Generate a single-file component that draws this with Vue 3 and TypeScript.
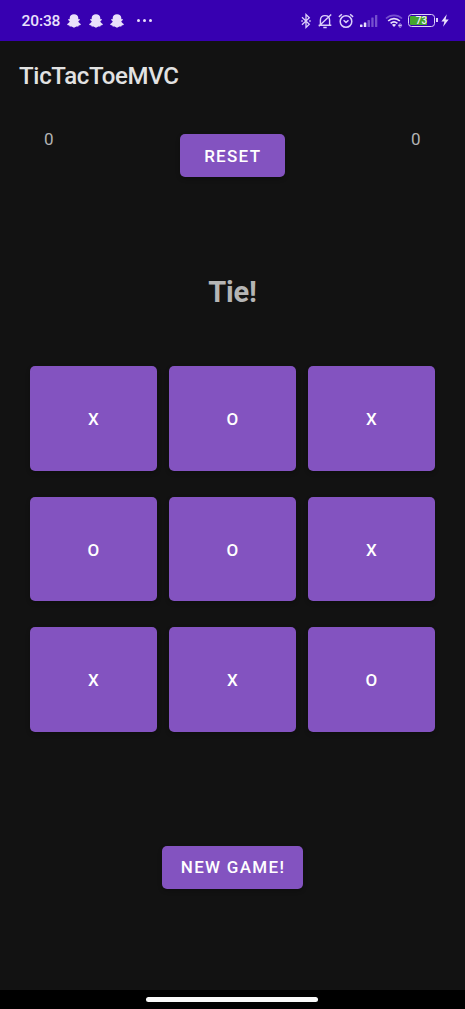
<script setup lang="ts">
import { ref } from 'vue'

type Mark = 'X' | 'O' | ''

const scores = ref<[number, number]>([0, 0])
const board = ref<Mark[]>(['X', 'O', 'X', 'O', 'O', 'X', 'X', 'X', 'O'])
const message = ref('Tie!')
const turn = ref<Mark>('X')

function newGame() {
  board.value = Array<Mark>(9).fill('')
  message.value = ''
  turn.value = 'X'
}

function reset() {
  scores.value = [0, 0]
  newGame()
}

function play(i: number) {
  if (board.value[i]) return
  board.value[i] = turn.value
  turn.value = turn.value === 'X' ? 'O' : 'X'
}
</script>

<template>
  <div class="phone">
    <header class="status">
      <span class="clock">20:38</span>
      <div class="ghosts">
        <svg v-for="n in 3" :key="n" width="14" height="14" viewBox="0 0 14 14">
          <path fill="#e9e0fb" d="M7 .2C4.500.2 2.700 1.800 2.700 4v1.300L1.500 5.100l-.4 1 1.600 1.200C2.300 8.600 1.500 9.400.2 10l.2 1 1.900.4.4 1.100 1.900-.1L7 13.800l2.400-1.400 1.900.1.4-1.100 1.900-.4.2-1c-1.300-.6-2.100-1.400-2.500-2.700l1.600-1.200-.4-1-1.200.2V4C11.300 1.800 9.500.2 7 .2z" />
        </svg>
      </div>
      <div class="dots"><i /><i /><i /></div>
      <div class="system">
        <svg class="bt" width="10" height="16" viewBox="0 0 10 16" fill="none" stroke="#dccffa" stroke-width="1.300">
          <path d="M1 4.300 8.300 11.300 5 14.400V1.600L8.300 4.700 1 11.700" />
          <path d="M.3 8h1.500M8.200 8h1.500" />
        </svg>
        <svg class="bell" width="14" height="16" viewBox="0 0 14 16" fill="none" stroke="#dccffa" stroke-width="1.400">
          <path d="M.7 12.300h12.600M2.400 12V7.200C2.400 4.200 4.200 2.600 7 2.600s4.600 1.600 4.600 4.600V12M5.300 14.500h3.400M13.200 1.400.8 13.200" />
        </svg>
        <svg class="alarm" width="16" height="16" viewBox="0 0 16 16" fill="none" stroke="#dccffa" stroke-width="1.500">
          <circle cx="8" cy="8.500" r="5.800" />
          <path d="M.9 3.900 3.900 1.300M15.100 3.900 12.100 1.300M5.600 7.300 8 9.400l2.500-2.100" />
        </svg>
        <svg class="signal" width="18" height="14" viewBox="0 0 18 14">
          <g fill="#e9e0fb"><rect x="0" y="10.500" width="2.500" height="2.500" rx=".5" /><rect x="3.800" y="8.500" width="2.500" height="4.500" rx=".5" /></g>
          <g fill="#7650ce"><rect x="7.500" y="6" width="2.500" height="7" rx=".5" /><rect x="11.300" y="3.500" width="2.300" height="9.500" rx=".5" /><rect x="15" y="1" width="2.300" height="12" rx=".5" /></g>
        </svg>
        <svg class="wifi" width="18" height="14" viewBox="0 0 18 14" fill="none">
          <path d="M1 4.500C5.500.2 12.500.2 17 4.500" stroke="#7650ce" stroke-width="1.700" />
          <path d="M3.200 7C6.500 3.800 11.500 3.800 14.800 7M5.600 9.300c2-1.800 4.800-1.800 6.800 0" stroke="#e9e0fb" stroke-width="1.700" />
          <path d="M6.900 10.800c1.200-1 3-1 4.200 0L9 12.900z" fill="#e9e0fb" />
          <path d="M13.700 11.500h2.900c0-2-2.900-2-2.900 0 0 1.800 1.800 1.900 2.700 1.200" stroke="#dccffa" stroke-width=".9" />
        </svg>
        <div class="battery"><div class="cell"><span>73</span></div></div>
        <svg class="bolt" width="8" height="13" viewBox="0 0 8 13"><path fill="#e9e0fb" d="M5.800.3.4 7.400h3L2.100 12.700 7.700 5.500H4.600z" /></svg>
      </div>
    </header>

    <h1 class="title">TicTacToeMVC</h1>

    <main class="game">
      <div class="top">
        <span class="score">{{ scores[0] }}</span>
        <button class="btn reset" @click="reset">RESET</button>
        <span class="score">{{ scores[1] }}</span>
      </div>
      <p class="message">{{ message }}</p>
      <div class="board">
        <button v-for="(mark, i) in board" :key="i" class="btn tile" @click="play(i)">{{ mark }}</button>
      </div>
      <button class="btn new" @click="newGame">NEW GAME!</button>
    </main>

    <footer class="nav"><div class="pill" /></footer>
  </div>
</template>

<style>
body {
  margin: 0;
  background: #121212;
}
</style>

<style scoped>
.phone {
  width: 465px;
  height: 1009px;
  display: flex;
  flex-direction: column;
  overflow: hidden;
  background: #121212;
  font-family: Roboto, "Liberation Sans", sans-serif;
}
.status {
  flex: none;
  box-sizing: border-box;
  height: 41px;
  padding: 0 16px 0 21.500px;
  display: flex;
  align-items: center;
  background: #3700b1;
}
.clock {
  width: 38.500px;
  font-size: 15.500px;
  font-weight: 500;
  letter-spacing: -0.100px;
  line-height: 20px;
  padding-top: 1px;
  color: #e9e0fb;
}
.ghosts {
  display: flex;
  gap: 7.500px;
  margin-left: 7px;
}
.dots {
  display: flex;
  gap: 3.300px;
  margin-left: 12.500px;
}
.dots i {
  width: 3px;
  height: 3px;
  border-radius: 50%;
  background: #e9e0fb;
}
.system {
  display: flex;
  align-items: center;
  margin-left: auto;
}
.bell { margin-left: 7px; }
.alarm { margin-left: 6px; }
.signal { margin-left: 6px; }
.wifi { margin-left: 7px; }
.battery {
  position: relative;
  box-sizing: border-box;
  width: 27px;
  height: 13px;
  margin-left: 5px;
  padding: 1px;
  border: 1.500px solid #dccffa;
  border-radius: 3.500px;
}
.battery::after {
  content: "";
  position: absolute;
  right: -3.500px;
  top: 3px;
  width: 1.500px;
  height: 4px;
  background: #dccffa;
}
.cell {
  height: 100%;
  display: flex;
  align-items: center;
  justify-content: center;
  border-radius: 1px;
  background: linear-gradient(90deg, #45a52e 73%, transparent 73%);
}
.cell span {
  font-size: 10px;
  font-weight: 500;
  line-height: 9px;
  color: #f0eafa;
}
.bolt { margin-left: 6px; }
.title {
  flex: none;
  box-sizing: border-box;
  height: 69px;
  margin: 0;
  padding-left: 19px;
  font-size: 24px;
  font-weight: 500;
  letter-spacing: -0.300px;
  line-height: 70px;
  color: #e2e2e2;
}
.game {
  flex: 1;
  display: flex;
  flex-direction: column;
  align-items: center;
}
.top {
  align-self: stretch;
  display: flex;
  align-items: flex-start;
  justify-content: space-between;
  height: 43px;
  margin: 24px 44.500px 0 44px;
}
.score {
  margin-top: -5px;
  font-size: 17px;
  line-height: 20px;
  color: #b3b3b3;
}
.btn {
  border: 0;
  padding: 0 0 0 1px;
  border-radius: 5px;
  background: #8353c0;
  color: #fff;
  font-family: inherit;
  font-size: 17px;
  font-weight: 500;
  letter-spacing: 1.300px;
  box-shadow: 0 2px 4px rgba(0, 0, 0, 0.25);
}
.reset {
  width: 105px;
  height: 43px;
}
.message {
  height: 40px;
  margin: 95px 0 0;
  font-size: 29px;
  font-weight: 700;
  letter-spacing: -0.200px;
  line-height: 40px;
  color: #b5b5b5;
}
.board {
  display: grid;
  grid-template-columns: repeat(3, 127px);
  grid-template-rows: repeat(3, 104.600px);
  gap: 26px 12px;
  margin-top: 54px;
}
.tile {
  padding-top: 2px;
}
.new {
  width: 141px;
  height: 43px;
  margin-top: 114px;
}
.nav {
  flex: none;
  height: 19px;
  display: flex;
  justify-content: center;
  background: #000;
}
.pill {
  width: 172px;
  height: 4.500px;
  margin: 7px 1px 0 0;
  border-radius: 3px;
  background: #fafafa;
}
</style>
